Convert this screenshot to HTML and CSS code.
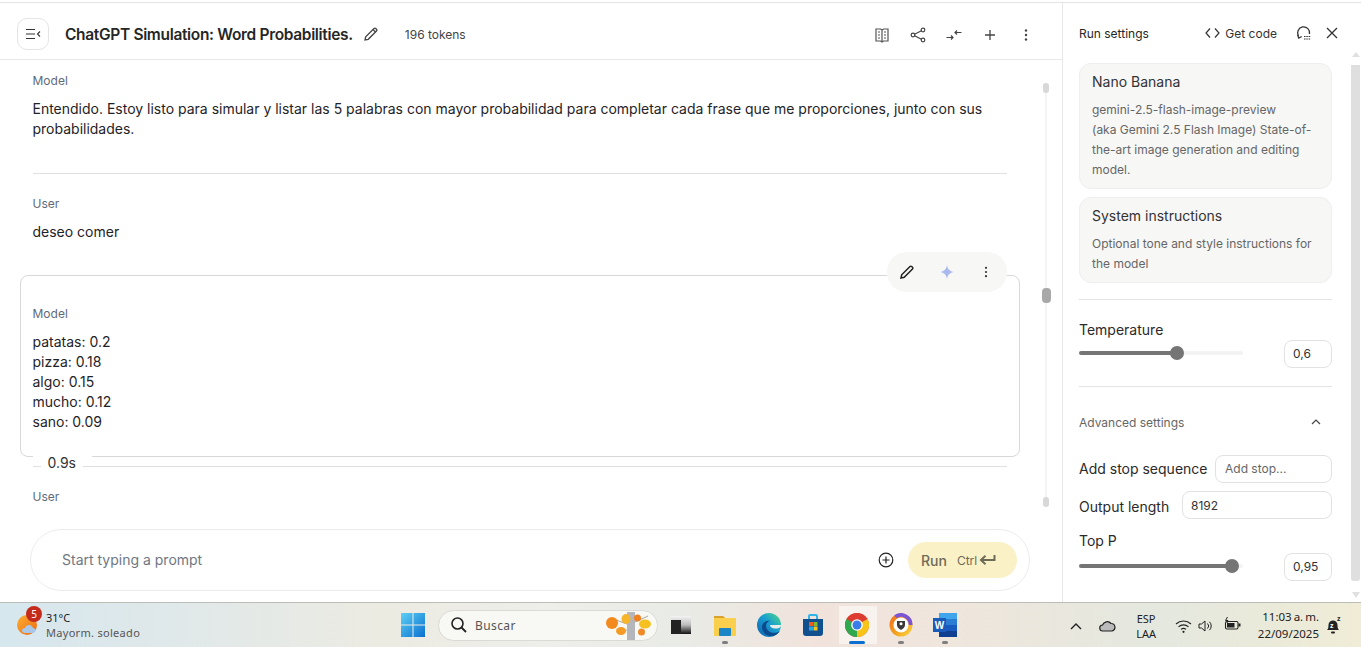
FILE: index.html
```html
<!DOCTYPE html>
<html lang="es">
<head>
<meta charset="utf-8">
<title>ChatGPT Simulation</title>
<link rel="stylesheet" href="styles.css">
</head>
<body>
<div class="app">
  <div class="main">
    <section class="chat">
      <header class="chat-head">
        <button class="menu-btn"><svg width="16" height="12" viewBox="0 0 16 12"><path d="M1 1.500h9M1 6h9M1 10.500h9M15 3.500 12.500 6 15 8.500" fill="none" stroke="#333" stroke-width="1.100"/></svg></button>
        <h1 class="title">ChatGPT Simulation: Word Probabilities.</h1>
        <svg class="pencil" width="16" height="16" viewBox="0 0 16 16"><path d="M2 14l.7-3.200L11 2.500a1.200 1.200 0 0 1 1.700 0l.8.800a1.200 1.200 0 0 1 0 1.700L5.200 13.300zM10 3.500l2.500 2.500" fill="none" stroke="#444" stroke-width="1.300"/></svg>
        <span class="tokens">196 tokens</span>
        <div class="head-icons">
          <svg width="16" height="16" viewBox="0 0 16 16"><path d="M8 3 6.500 2H2v12h4.500L8 15l1.500-1H14V2H9.500zM8 3v12M4 5h2M4 8h2M4 11h2M10 5h2M10 8h2M10 11h2" fill="none" stroke="#555" stroke-width="1.200"/></svg>
          <svg width="16" height="16" viewBox="0 0 16 16"><g fill="none" stroke="#444" stroke-width="1.200"><circle cx="3" cy="8" r="1.800"/><circle cx="13" cy="3" r="1.800"/><circle cx="13" cy="13" r="1.800"/><path d="M4.600 7.200 11.400 3.800M4.600 8.800l6.800 3.400"/></g></svg>
          <svg width="16" height="16" viewBox="0 0 16 16"><g fill="none" stroke="#444" stroke-width="1.200"><path d="M0.500 10.500h6.500M5 8.500l2 2-2 2M15.500 5.500H9M11 3.500l-2 2 2 2"/></g></svg>
          <svg width="16" height="16" viewBox="0 0 16 16"><path d="M8 3v10M3 8h10" stroke="#444" stroke-width="1.300"/></svg>
          <svg width="16" height="16" viewBox="0 0 16 16"><g fill="#444"><circle cx="8" cy="3.500" r="1.200"/><circle cx="8" cy="8" r="1.200"/><circle cx="8" cy="12.500" r="1.200"/></g></svg>
        </div>
      </header>
      <div class="scroll-area">
        <div class="thread">
          <div class="turn first">
            <div class="role">Model</div>
            <p class="msg">Entendido. Estoy listo para simular y listar las 5 palabras con mayor probabilidad para completar cada frase que me proporciones, junto con sus probabilidades.</p>
          </div>
          <hr class="rule">
          <div class="turn user">
            <div class="role">User</div>
            <p class="msg">deseo comer</p>
          </div>
          <div class="selected">
            <div class="role">Model</div>
            <p class="msg list">patatas: 0.2<br>pizza: 0.18<br>algo: 0.15<br>mucho: 0.12<br>sano: 0.09</p>
            <div class="actions">
              <svg width="16" height="16" viewBox="0 0 16 16"><path d="M2 14l.7-3.200L11 2.500a1.200 1.200 0 0 1 1.700 0l.8.800a1.200 1.200 0 0 1 0 1.700L5.200 13.300z" fill="none" stroke="#222" stroke-width="1.500"/></svg>
              <svg width="16" height="16" viewBox="0 0 16 16"><path d="M8 1c.7 4.300 2.700 6.300 7 7-4.300.7-6.300 2.700-7 7-.7-4.300-2.700-6.300-7-7 4.300-.7 6.300-2.700 7-7z" fill="#a9b9ee"/></svg>
              <svg width="16" height="16" viewBox="0 0 16 16"><g fill="#333"><circle cx="8" cy="3.800" r="1.100"/><circle cx="8" cy="8" r="1.100"/><circle cx="8" cy="12.200" r="1.100"/></g></svg>
            </div>
          </div>
          <div class="time-row"><span class="time">0.9s</span></div>
          <div class="turn last">
            <div class="role">User</div>
          </div>
        </div>
        <div class="chat-scroll">
          <i class="thumb t1"></i><i class="thumb t2"></i><i class="thumb t3"></i>
        </div>
      </div>
      <div class="prompt">
        <span class="placeholder">Start typing a prompt</span>
        <svg class="add" width="16" height="16" viewBox="0 0 16 16"><circle cx="8" cy="8" r="6.800" fill="none" stroke="#222" stroke-width="1.200"/><path d="M8 4.500v7M4.500 8h7" stroke="#222" stroke-width="1.200"/></svg>
        <button class="run"><span class="run-label">Run</span><span class="run-ctrl">Ctrl</span><svg width="17" height="12" viewBox="0 0 17 12"><path d="M15.500 1v5H2.500M6.500 1.800 2 6l4.500 4.200" fill="none" stroke="#6e6a58" stroke-width="2"/></svg></button>
      </div>
    </section>
    <aside class="settings">
      <div class="set-head">
        <span class="set-title">Run settings</span>
        <span class="get-code"><svg width="15" height="12" viewBox="0 0 15 12"><path d="M5 1.500 1 6l4 4.500M10 1.500 14 6l-4 4.500" fill="none" stroke="#333" stroke-width="1.200"/></svg>Get code</span>
        <svg class="tune" width="16" height="16" viewBox="0 0 16 16"><path d="M2.500 11A6 6 0 1 1 13.500 9M1.500 9.500l1.200 3.500 3-1.500" fill="none" stroke="#333" stroke-width="1.300"/><path d="M8 11.500h7M8 14h7" stroke="#333" stroke-width="1.200" stroke-dasharray="1.500 .8"/></svg>
        <svg class="close" width="14" height="14" viewBox="0 0 14 14"><path d="M2 2l10 10M12 2 2 12" stroke="#333" stroke-width="1.300"/></svg>
      </div>
      <div class="set-body">
        <div class="set-col">
          <div class="card model-card">
            <div class="card-title">Nano Banana</div>
            <div class="card-text">gemini-2.5-flash-image-preview<br>(aka Gemini 2.5 Flash Image) State-of-the-art image generation and editing model.</div>
          </div>
          <div class="card sys-card">
            <div class="card-title">System instructions</div>
            <div class="card-text">Optional tone and style instructions for the model</div>
          </div>
          <hr class="set-rule r1">
          <div class="label temp-label">Temperature</div>
          <div class="slider-row temp-row">
            <div class="slider"><i class="fill" style="width:60%"></i><i class="knob"></i></div>
            <span class="num">0,6</span>
          </div>
          <hr class="set-rule r2">
          <div class="adv">
            <span>Advanced settings</span>
            <svg width="12" height="8" viewBox="0 0 12 8"><path d="M2 6l4-4 4 4" fill="none" stroke="#444" stroke-width="1.200"/></svg>
          </div>
          <div class="field f1"><span class="label">Add stop sequence</span><span class="input ph">Add stop...</span></div>
          <div class="field f2"><span class="label">Output length</span><span class="input val">8192</span></div>
          <div class="label top-label">Top P</div>
          <div class="slider-row top-row">
            <div class="slider"><i class="fill" style="width:94%"></i><i class="knob"></i></div>
            <span class="num">0,95</span>
          </div>
        </div>
        <div class="set-scroll"><i class="arrow up"></i><i class="bar"></i><i class="arrow down"></i></div>
      </div>
    </aside>
  </div>
  <footer class="taskbar">
    <div class="weather">
      <span class="sun"><svg width="24" height="24" viewBox="0 0 24 24"><defs><linearGradient id="sg" x1="0" y1="0" x2="1" y2="1"><stop offset="0" stop-color="#fbb034"/><stop offset="1" stop-color="#ee6a10"/></linearGradient></defs><circle cx="11" cy="12" r="10" fill="url(#sg)"/><path d="M9 20c-2 0-3-1-3-2.500S7.500 15 9 15c.5-2 2-3 4-3s3.500 1.500 4 3c1.500 0 2.500 1 2.500 2.500S18 20 17 20z" fill="#a9c8e8"/></svg><b class="badge">5</b></span>
      <div class="w-text"><span class="w-temp">31°C</span><span class="w-desc">Mayorm. soleado</span></div>
    </div>
    <div class="tb-center">
      <svg class="win" width="24" height="24" viewBox="0 0 24 24"><defs><linearGradient id="wg" x1="0" y1="0" x2="1" y2="1"><stop offset="0" stop-color="#5cd0f5"/><stop offset="1" stop-color="#0a6fd0"/></linearGradient></defs><path d="M0 0h11.500v11.500H0zM12.500 0H24v11.500H12.500zM0 12.500h11.500V24H0zM12.500 12.500H24V24H12.500z" fill="url(#wg)"/></svg>
      <div class="search">
        <svg width="18" height="18" viewBox="0 0 18 18"><circle cx="7.500" cy="7.500" r="5.500" fill="none" stroke="#222" stroke-width="1.600"/><path d="M11.500 11.500 16 16" stroke="#222" stroke-width="1.800"/></svg>
        <span>Buscar</span>
        <svg class="tree" width="48" height="28" viewBox="0 0 48 28"><rect x="23" y="0" width="8" height="28" fill="#b4b6bc"/><path d="M31 10 44 4M23 12 12 8M23 18l-6 2" stroke="#a8a8a8" stroke-width="1"/><ellipse cx="8" cy="11" rx="6" ry="6" fill="#f28a1d"/><ellipse cx="22" cy="7" rx="4.500" ry="5" fill="#f7b52c"/><ellipse cx="33.500" cy="6" rx="3.500" ry="3.500" fill="#f08020"/><ellipse cx="41" cy="12" rx="6" ry="4.500" fill="#f5c020"/><ellipse cx="17" cy="19" rx="5" ry="4" fill="#f59a23"/><ellipse cx="37.500" cy="20" rx="3.500" ry="3.500" fill="#f08a28"/></svg>
      </div>
      <div class="apps">
        <span class="app-slot"><svg width="24" height="24" viewBox="0 0 24 24"><defs><linearGradient id="tg" x1="0" y1="0" x2="0" y2="1"><stop offset="0" stop-color="#f4f4f4"/><stop offset=".5" stop-color="#bbb"/><stop offset="1" stop-color="#111"/></linearGradient></defs><rect x="2" y="3" width="20" height="18" fill="url(#tg)"/><path d="M2 7h10v14H2z" fill="#222"/></svg></span>
        <span class="app-slot"><svg width="24" height="24" viewBox="0 0 24 24"><path d="M1 3h9l2 2h11v18H1z" fill="#fbcf4e"/><path d="M1 3h9l2 2H1z" fill="#d9a22d"/><rect x="6" y="15" width="12" height="8" rx="1" fill="#1a86c8"/></svg><i class="dot"></i></span>
        <span class="app-slot"><svg width="24" height="24" viewBox="0 0 24 24"><defs><linearGradient id="eg" x1="0" y1="1" x2="1" y2="0"><stop offset="0" stop-color="#0f5fb0"/><stop offset=".55" stop-color="#1a9ed0"/><stop offset="1" stop-color="#4fdc82"/></linearGradient></defs><circle cx="12" cy="12" r="12" fill="url(#eg)"/><path d="M24 13c-1 2-3 2.500-6 2.500-3 0-5-1.500-5-3.500h11z" fill="#e9edea"/><path d="M9 13c0-3 2-5 5-5-5-1-9 2-9 6 0 5 4 9 9 9 4 0 7-2 9-5-3 2-6 2-8.500 1.500S9 16 9 13z" fill="#0b4a8c"/></svg></span>
        <span class="app-slot"><svg width="24" height="24" viewBox="0 0 24 24"><path d="M2 6h20v14a3 3 0 0 1-3 3H5a3 3 0 0 1-3-3z" fill="#11508f"/><path d="M8 6V3a1 1 0 0 1 1-1h6a1 1 0 0 1 1 1v3" fill="none" stroke="#32b5e8" stroke-width="2"/><path d="M8 9h4v4H8z" fill="#ee5a24"/><path d="M12.500 9h4v4h-4z" fill="#7dbb30"/><path d="M8 13.500h4v4H8z" fill="#2ba7e0"/><path d="M12.500 13.500h4v4h-4z" fill="#fcc419"/></svg></span>
        <span class="app-slot active"><svg width="24" height="24" viewBox="0 0 24 24"><circle cx="12" cy="12" r="12" fill="#dd3c30"/><path d="M12 12 22.400 6A12 12 0 0 1 12 24z" fill="#f8c419"/><path d="M12 12 12 24A12 12 0 0 1 1.600 6z" fill="#2fa84f"/><path d="M12 0A12 12 0 0 1 22.400 6H12zM1.600 6A12 12 0 0 1 12 0v6z" fill="#dd3c30"/><circle cx="12" cy="12" r="5.800" fill="#fff"/><circle cx="12" cy="12" r="4.500" fill="#3a7de8"/></svg><i class="dot long"></i></span>
        <span class="app-slot"><svg width="24" height="24" viewBox="0 0 24 24"><defs><linearGradient id="ag" x1="0" y1="0" x2="1" y2="1"><stop offset="0" stop-color="#ef6a1d"/><stop offset=".6" stop-color="#f6a51f"/><stop offset="1" stop-color="#f7df49"/></linearGradient></defs><circle cx="12" cy="12" r="11.500" fill="url(#ag)"/><path d="M5 2.500A11.500 11.500 0 0 1 23.500 12h-4A7.500 7.500 0 0 0 8 5z" fill="#7a55d8"/><circle cx="12" cy="12" r="7.500" fill="#fff"/><path d="M8 8h8v4c0 2-2 4-4 5-2-1-4-3-4-5z" fill="#3a3a3a"/><circle cx="12" cy="10.800" r="1.500" fill="#fff"/></svg><i class="dot"></i></span>
        <span class="app-slot"><svg width="24" height="24" viewBox="0 0 24 24"><rect x="6" y="0" width="18" height="24" fill="#2b7cd3"/><rect x="6" y="0" width="18" height="6" fill="#41a5ee"/><rect x="6" y="12" width="18" height="6" fill="#185abd"/><rect x="6" y="18" width="18" height="6" fill="#103f91"/><rect x="0" y="5" width="13" height="14" fill="#1a5cbb"/><text x="6.500" y="16" class="word-w">W</text></svg><i class="dot"></i></span>
      </div>
    </div>
    <div class="tray">
      <svg class="chev" width="14" height="9" viewBox="0 0 14 9"><path d="M2 7l5-5 5 5" fill="none" stroke="#222" stroke-width="1.400"/></svg>
      <svg class="cloud" width="17" height="12" viewBox="0 0 17 12"><path d="M4 11a3 3 0 0 1-.5-6A5 5 0 0 1 12 3.500 3.800 3.800 0 0 1 13 11z" fill="#bbb" stroke="#222" stroke-width="1.200"/></svg>
      <div class="lang"><span>ESP</span><span>LAA</span></div>
      <svg class="wifi" width="17" height="14" viewBox="0 0 17 14"><path d="M1 5a11 11 0 0 1 15 0M3.500 7.800a7.500 7.500 0 0 1 10 0M6 10.400a4 4 0 0 1 5 0" fill="none" stroke="#222" stroke-width="1.100"/><circle cx="8.500" cy="12.800" r="1.100" fill="#222"/></svg>
      <svg class="vol" width="16" height="14" viewBox="0 0 16 14"><path d="M1 5v4h2.500L7 12V2L3.500 5z" fill="none" stroke="#222" stroke-width="1"/><path d="M9.500 4.500a3.500 3.500 0 0 1 0 5M11.500 2.800a6 6 0 0 1 0 8.400" fill="none" stroke="#222" stroke-width="1"/></svg>
      <svg class="bat" width="17" height="14" viewBox="0 0 17 14"><rect x="1.500" y="4.500" width="12.500" height="7.500" rx="1.500" fill="none" stroke="#222" stroke-width="1.100"/><rect x="3" y="6" width="7.500" height="4.500" fill="#222"/><rect x="14.500" y="6.500" width="2" height="3" fill="#222"/><path d="M3.500 0 1.500 3.500h2.500L3 6" fill="none" stroke="#222"/></svg>
      <div class="clock"><span class="clock-time">11:03 a. m.</span><span>22/09/2025</span></div>
      <svg class="bell" width="18" height="20" viewBox="0 0 18 20"><path d="M2 15c1-1 1.500-2 1.500-5A4.500 4.500 0 0 1 8 5.500 4.500 4.500 0 0 1 12.500 10c0 3 .5 4 1.500 5z" fill="#222"/><rect x="6" y="16.500" width="4" height="2" rx="1" fill="#222"/><text x="5" y="13" class="zz">z</text><text x="12" y="6" class="zz dark">z</text></svg>
    </div>
  </footer>
</div>
</body>
</html>
```
FILE: styles.css
```css
* { box-sizing: border-box; }
html, body { margin: 0; height: 100%; overflow: hidden; }
body { background: #fff; font-family: Inter, "Liberation Sans", sans-serif; color: #1f1f1f; }
.app { width: 1361px; height: 647px; display: flex; flex-direction: column; padding-top: 2px; }
.main { flex: 1; min-height: 0; display: flex; border-top: 1px solid #e3e3e3; }

.chat { width: 1062px; display: flex; flex-direction: column; min-height: 0; }
.chat-head { height: 57px; flex: none; display: flex; align-items: center; padding: 6px 0 0 17px; border-bottom: 1px solid #e8e8e8; }
.menu-btn { width: 32px; height: 32px; padding: 0; background: #fff; border: 1px solid #e4e4e4; border-radius: 10px; display: flex; align-items: center; justify-content: center; }
.title { margin: 0 0 0 16px; padding-top: 1px; font-size: 15.500px; font-weight: 600; line-height: 20px; color: #262626; letter-spacing: -0.33px; white-space: nowrap; }
.pencil { margin-left: 10px; }
.tokens { margin-left: 26px; font-size: 12px; color: #444; }
.head-icons { margin-left: auto; margin-right: 28px; margin-top: 1px; display: flex; gap: 20px; align-items: center; }

.scroll-area { flex: 1; min-height: 0; position: relative; overflow: hidden; }
.thread { width: 1020px; padding-left: 20px; }
.turn { padding-left: 12.500px; }
.role { font-size: 12px; line-height: 16px; color: #5f6b7a; }
.msg { margin: 0; font-size: 14px; line-height: 20px; color: #1f2328; letter-spacing: -.003px; }
.first { padding-top: 13px; padding-right: 13px; }
.first .msg { margin-top: 10px; }
.rule { margin: 34px 13px 0 12.500px; border: 0; border-top: 1px solid #e0e0e0; }
.user { padding-top: 22px; }
.user .msg { margin-top: 10px; }
.selected { position: relative; margin-top: 33px; height: 182px; border: 1px solid #d8d8d8; border-radius: 8px; padding: 30px 11.500px 0; }
.selected .msg { margin-top: 10px; }
.actions { position: absolute; top: -24px; right: 12px; width: 120px; height: 40px; border-radius: 20px; background: #f7f7f6; display: flex; align-items: center; justify-content: space-between; padding: 0 13px 0 12px; }
.time-row { margin: 9px 13px 0 12.500px; height: 1px; background: #e0e0e0; position: relative; }
.time-row::before { content: ""; position: absolute; left: 0; top: -10px; width: 59px; height: 2px; background: #fff; }
.time { position: absolute; left: 8px; top: -13px; padding: 0 7px 0 7px; background: #fff; font-size: 14px; line-height: 20px; color: #333; }
.last { padding-top: 22px; }

.chat-scroll { position: absolute; left: 1043px; top: 0; width: 6px; height: 100%; }
.chat-scroll::before { content: ""; position: absolute; left: 2px; top: 30px; width: 2px; height: 410px; background: #f4f4f4; }
.thumb { position: absolute; left: 0; width: 6px; border-radius: 3px; background: #d8d8d8; }
.t1 { top: 23px; height: 10px; }
.t2 { top: 228px; height: 15px; width: 9px; left: -1.500px; border-radius: 4px; background: #a8a8a8; }
.t3 { top: 437px; height: 10px; }

.prompt { flex: none; height: 62px; margin: 0 32px 11px 30px; border: 1px solid #ececec; border-radius: 31px; display: flex; align-items: center; padding: 0 12px 0 31px; }
.placeholder { flex: 1; font-size: 14px; line-height: 20px; margin-top: -1px; color: #6f7782; }
.add { margin-right: 14px; }
.run { width: 109px; height: 36px; border: 0; border-radius: 18px; background: #fbf1c6; display: flex; align-items: center; padding: 0 0 0 13px; font-family: inherit; color: #6e6a58; }
.run-label { font-size: 14px; font-weight: 500; }
.run-ctrl { font-size: 12px; margin-left: 10px; margin-right: 2px; }

.settings { width: 299px; border-left: 1px solid #e8e8e8; display: flex; flex-direction: column; min-height: 0; }
.set-head { height: 60px; flex: none; display: flex; align-items: center; padding: 0 22px 0 16px; }
.set-title { font-size: 12px; color: #262626; flex: 1; }
.get-code { display: flex; align-items: center; gap: 5px; font-size: 12px; color: #333; }
.tune { margin-left: 19px; }
.close { margin-left: 13px; }
.set-body { flex: 1; min-height: 0; display: flex; }
.set-col { width: 253px; margin-left: 16px; }
.card { background: #f7f7f6; border: 1px solid #eeeeee; border-radius: 12px; padding: 9px 12px; }
.card-title { font-size: 14px; line-height: 18px; color: #333; }
.card-text { margin-top: 9px; font-size: 12px; line-height: 20px; color: #666; }
.model-card { height: 126px; }
.sys-card { height: 86px; margin-top: 8px; }
.set-rule { margin: 0; border: 0; border-top: 1px solid #e3e3e3; }
.r1 { margin-top: 16px; }
.label { font-size: 14px; line-height: 18px; color: #2a2a2a; }
.temp-label { margin-top: 21px; }
.slider-row { display: flex; align-items: center; justify-content: space-between; }
.temp-row { height: 28px; margin-top: 1px; }
.slider { position: relative; width: 164px; height: 4px; border-radius: 2px; background: #f3f3f3; margin-top: 0; }
.fill { display: block; height: 100%; background: #757575; border-radius: 2px; }
.knob { position: absolute; top: -5px; width: 14px; height: 14px; border-radius: 50%; background: #757575; }
.temp-row .knob { left: 91px; }
.top-row .knob { left: 146px; }
.num { width: 48px; height: 28px; border: 1px solid #e2e2e2; border-radius: 8px; font-size: 12px; line-height: 26px; padding-left: 8px; color: #333; }
.temp-row .slider { margin-top: -2px; }
.top-row .slider { margin-top: -3px; }
.top-row { height: 28px; margin-top: 3px; }
.r2 { margin-top: 18px; }
.adv { height: 40px; margin-top: 15px; display: flex; align-items: center; justify-content: space-between; padding-right: 10px; font-size: 12px; color: #666; }
.field { display: flex; align-items: center; justify-content: space-between; height: 28px; }
.f1 { margin-top: 13px; }
.f2 { margin-top: 8px; }
.f2 .label { margin-top: 4px; }
.input { height: 28px; border: 1px solid #e2e2e2; border-radius: 8px; font-size: 12px; line-height: 26px; }
.f1 .input { width: 117px; padding-left: 9px; color: #666; }
.f2 .input { width: 150px; padding-left: 8px; line-height: 28px; color: #333; }
.top-label { margin-top: 13px; }
.set-scroll { width: 29px; position: relative; }
.bar { display: block; position: absolute; left: 19px; top: 2px; width: 9px; height: 516px; background: #dfdfdf; border-radius: 0 0 3px 3px; }
.arrow { position: absolute; left: 20px; width: 0; height: 0; border-left: 4px solid transparent; border-right: 4px solid transparent; }
.up { top: -11px; border-bottom: 5px solid #e0e0e0; }
.down { top: 529px; border-top: 6px solid #e0e0e0; }

.taskbar { flex: none; height: 45px; position: relative; display: flex; align-items: center; border-top: 1px solid #bdbdb8; background: linear-gradient(90deg, #d6e7ee 0%, #dfe8ea 12%, #ecebe2 28%, #eeeeea 40%, #e9ebe6 50%, #f1e3dc 60%, #efe6dc 70%, #e4e8df 85%, #f0ecd6 100%); }
.weather { display: flex; align-items: center; margin-left: 16px; width: 380px; }
.sun { position: relative; width: 24px; height: 24px; display: block; }
.sun svg { display: block; }
.badge { position: absolute; left: 10px; top: -7px; width: 16px; height: 16px; border-radius: 50%; background: #c42b1c; color: #fff; font-weight: 400; font-size: 10px; line-height: 16px; text-align: center; font-family: "Noto Sans", sans-serif; }
.w-text { display: flex; flex-direction: column; margin-left: 6px; padding-top: 1px; font-family: "Noto Sans", sans-serif; font-size: 11px; line-height: 16px; }
.w-temp { color: #1c1c1c; }
.w-desc { color: #555; letter-spacing: .3px; margin-top: -1px; }
.tb-center { position: absolute; left: 401px; top: 0; height: 100%; display: flex; align-items: center; }
.win { flex: none; }
.search { margin-left: 13px; width: 220px; height: 31px; border-radius: 16px; background: #f8f8f4; border: 1px solid #dadad6; display: flex; align-items: center; padding-left: 11px; font-family: "Noto Sans", sans-serif; font-size: 12px; color: #555; position: relative; }
.search span { margin-left: 7px; letter-spacing: .4px; }
.tree { position: absolute; right: 5px; top: 1px; }
.apps { display: flex; margin-left: 1px; }
.app-slot { width: 44px; height: 38px; display: flex; align-items: center; justify-content: center; position: relative; }
.active { background: linear-gradient(rgba(255,255,255,.55), rgba(255,255,255,.55)) calc(50% + 1px) 50% / 38px 100% no-repeat; }
.dot { position: absolute; left: 19px; bottom: 0; width: 6px; height: 3px; border-radius: 2px; background: #7f7f7f; }
.long { left: 14px; width: 16px; background: #0a6fd0; }
.word-w { font: 700 10px "Liberation Sans", sans-serif; fill: #fff; text-anchor: middle; }
.tray { position: absolute; right: 0; top: 0; height: 100%; font-family: "Noto Sans", sans-serif; font-size: 11px; color: #222; }
.tray > svg { position: absolute; }
.chev { right: 278px; top: 19px; }
.cloud { right: 245px; top: 17px; }
.lang { position: absolute; right: 205px; top: 8px; display: flex; flex-direction: column; align-items: center; line-height: 15px; }
.wifi { right: 169px; top: 16px; }
.vol { right: 147px; top: 16px; }
.bat { right: 120px; top: 14px; }
.clock { position: absolute; right: 42px; top: 5px; width: 70px; display: flex; flex-direction: column; align-items: flex-end; line-height: 17px; white-space: nowrap; font-size: 11.500px; }
.clock-time { word-spacing: -1px; }
.bell { right: 18px; top: 12px; }
.zz { font: 700 7px "Liberation Sans", sans-serif; fill: #fff; }
.zz.dark { fill: #222; }
```
